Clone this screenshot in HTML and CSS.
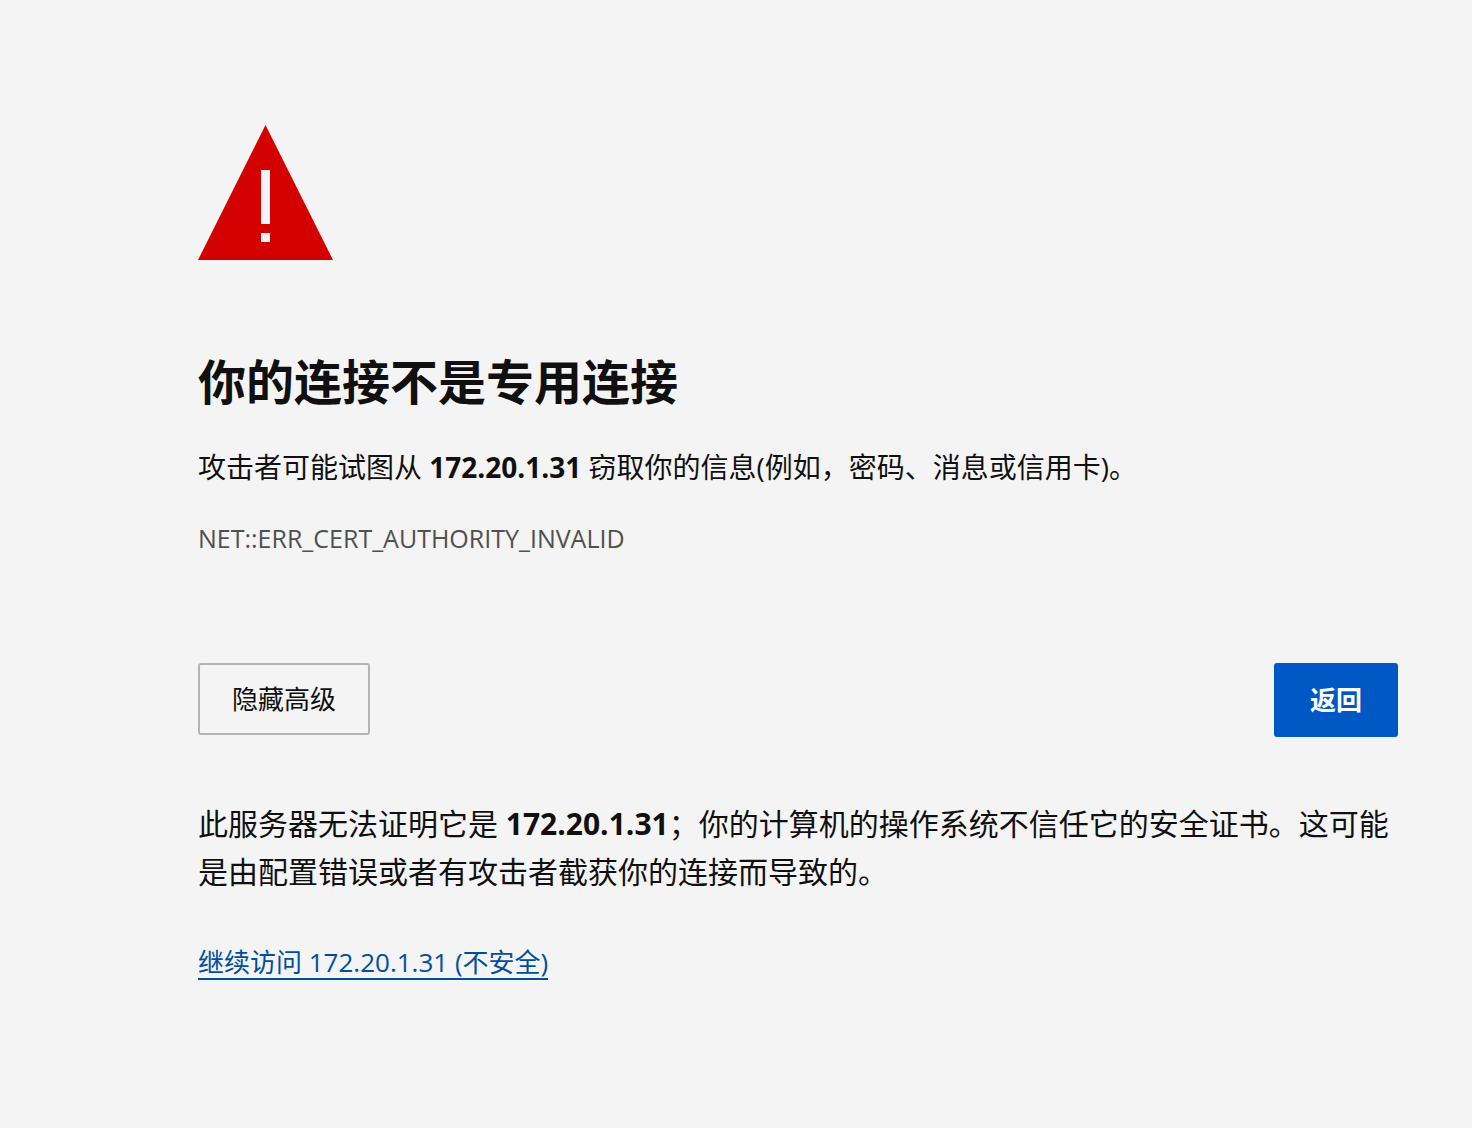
FILE: index.html
```html
<!DOCTYPE html>
<html lang="zh-CN">
<head>
    <meta charset="UTF-8">
    <meta name="viewport" content="width=device-width, initial-scale=1.0">
    <title>隐私错误</title>
    <link rel="stylesheet" href="styles.css">
</head>
<body>
    <main class="interstitial">
        <svg class="icon" viewBox="0 0 135 135" aria-hidden="true">
            <path fill="#d30000" d="M67.500 0L135 135H0z"/>
            <path fill="#f4f4f4" d="M63 45h9v54h-9zM63 108h9v9h-9z"/>
        </svg>

        <h1>你的连接不是专用连接</h1>
        <p class="summary">攻击者可能试图从 <strong>172.20.1.31</strong> 窃取你的信息(例如，密码、消息或信用卡)。</p>
        <p class="error-code">NET::ERR_CERT_AUTHORITY_INVALID</p>

        <div class="buttons">
            <button type="button" class="secondary-button">隐藏高级</button>
            <button type="button" class="primary-button">返回</button>
        </div>

        <div class="details">
            <p class="explanation">此服务器无法证明它是 <strong>172.20.1.31</strong>；你的计算机的操作系统不信任它的安全证书。这可能是由配置错误或者有攻击者截获你的连接而导致的。</p>
            <a href="#" class="proceed-link">继续访问 172.20.1.31 (不安全)</a>
        </div>
    </main>
</body>
</html>
```

FILE: styles.css
```css
body {
    margin: 0;
    background-color: #f4f4f4;
    color: #101010;
    font-family: "Open Sans", "Noto Sans CJK SC", sans-serif;
}
.interstitial {
    max-width: 1200px;
    margin: 0 74px 0 auto;
    padding: 125px 0 80px;
}
.icon {
    display: block;
    width: 135px;
    height: 135px;
}
h1 {
    margin: 86px 0 0;
    font-size: 48px;
    font-weight: bold;
    line-height: 72px;
}
.summary {
    margin: 28px 0 0;
    font-size: 28px;
    line-height: 42px;
}
.error-code {
    margin: 30px 0 0;
    color: #505050;
    font-size: 25px;
    line-height: 40px;
}
.buttons {
    display: flex;
    justify-content: space-between;
    align-items: flex-start;
    margin-top: 105px;
}
button {
    border-radius: 3px;
    font-family: inherit;
    font-size: 26px;
    line-height: 40px;
    cursor: pointer;
}
.secondary-button {
    padding: 14px 32px;
    border: 2px solid #b5b5b5;
    background-color: transparent;
    color: #101010;
}
.primary-button {
    padding: 17px 36px;
    border: none;
    background-color: #0058c4;
    color: #ffffff;
    font-weight: bold;
}
.details {
    margin-top: 63px;
}
.explanation {
    margin: 0 0 50px;
    font-size: 30px;
    line-height: 48px;
}
.proceed-link {
    display: inline-block;
    border-bottom: 2px solid #004f9e;
    color: #004f9e;
    font-size: 26px;
    line-height: 32px;
    text-decoration: none;
}
```
